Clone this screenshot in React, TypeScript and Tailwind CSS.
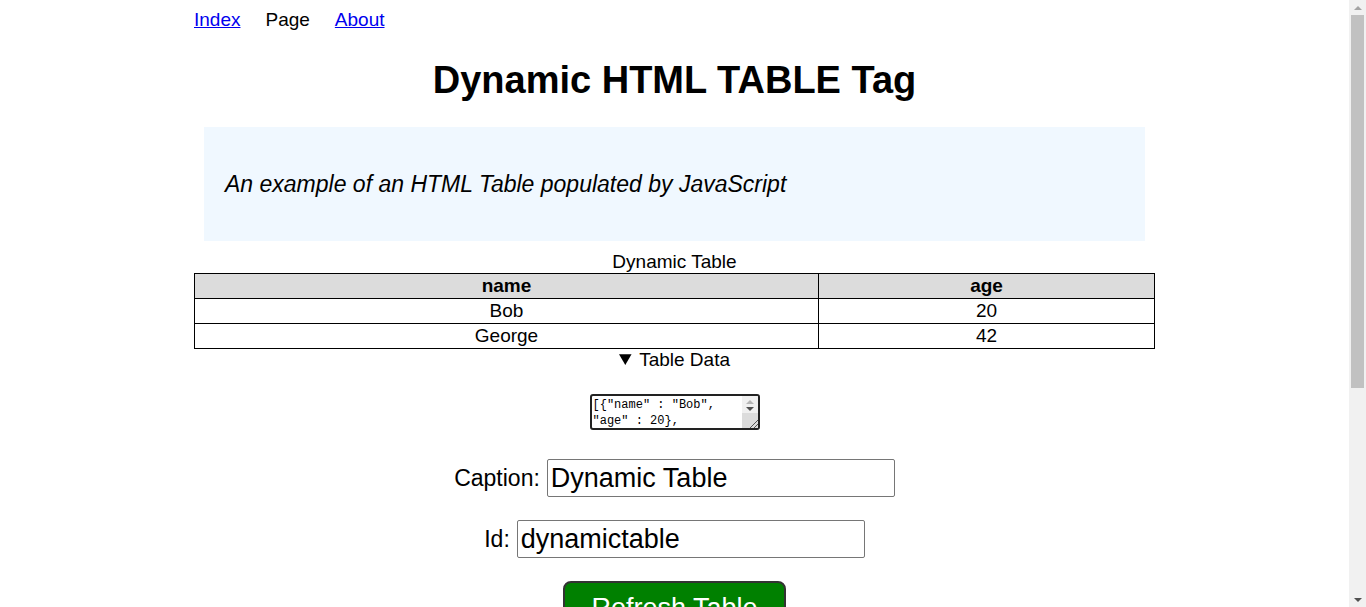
import { useState } from 'react';

type Row = { name: string; age: number };

const initialData: Row[] = [
  { name: 'Bob', age: 20 },
  { name: 'George', age: 42 },
];

// window scrollbar, drawn since the page is longer than the view
function PageScrollbar() {
  return (
    <div className="w-[17px] shrink-0 bg-[#f1f1f1] flex flex-col items-center">
      <div className="h-[15px] flex items-center justify-center">
        <div className="w-0 h-0 border-l-[4px] border-r-[4px] border-b-[4px] border-l-transparent border-r-transparent border-b-[#a3a3a3]" />
      </div>
      <div className="w-[13px] h-[373px] bg-[#c1c1c1]" />
      <div className="flex-1" />
      <div className="h-[15px] flex items-center justify-center">
        <div className="w-0 h-0 border-l-[4px] border-r-[4px] border-t-[4px] border-l-transparent border-r-transparent border-t-[#505050]" />
      </div>
    </div>
  );
}

export default function App() {
  const [caption, setCaption] = useState('Dynamic Table');
  const [tableId, setTableId] = useState('dynamictable');
  const [json, setJson] = useState(
    '[{"name" : "Bob", "age" : 20},\n{"name" : "George", "age" : 42}]'
  );
  const [rows, setRows] = useState<Row[]>(initialData);

  const refresh = () => {
    try {
      setRows(JSON.parse(json));
    } catch (e) {
      console.log('bad json', e);
    }
  };

  return (
    <div className="h-screen flex overflow-hidden bg-white text-black font-['Liberation_Sans',Arial,sans-serif] text-[19px]">
      <div className="flex-1 min-w-0">
        <div className="max-w-[961px] mx-auto pb-[310px]">
          {/* Nav */}
          <nav className="flex gap-[25px] pt-[9px] leading-[22px]">
            <a href="#" className="text-[#0000ee] underline">Index</a>
            <span>Page</span>
            <a href="#" className="text-[#0000ee] underline">About</a>
          </nav>

          <h1 className="mt-[27px] text-center text-[38px] leading-[44px] font-bold">
            Dynamic HTML TABLE Tag
          </h1>

          {/* Intro */}
          <div className="mt-[25px] mx-[10px] h-[114px] bg-[#f0f8ff] flex items-center px-[21px]">
            <p className="italic text-[23px] leading-[26px]">
              An example of an HTML Table populated by JavaScript
            </p>
          </div>

          {/* Table */}
          <table id={tableId} className="mt-[9px] w-full border-collapse">
            <caption className="leading-[22px] pt-px">{caption}</caption>
            <thead>
              <tr className="bg-[#dcdcdc]">
                <th className="w-[624px] border border-black font-bold leading-[22px] py-px">name</th>
                <th className="border border-black font-bold leading-[22px] py-px">age</th>
              </tr>
            </thead>
            <tbody>
              {rows.map((r) => (
                <tr key={r.name}>
                  <td className="border border-black text-center leading-[22px] py-px">{r.name}</td>
                  <td className="border border-black text-center leading-[22px] py-px">{r.age}</td>
                </tr>
              ))}
            </tbody>
          </table>

          {/* Table data editor */}
          <details open className="text-center">
            <summary className="leading-[22px] cursor-pointer">Table Data</summary>
            <div className="mt-[23px] inline-flex w-[170px] h-[36px] border-2 border-[#222] rounded-[3px] overflow-hidden align-top">
              <textarea
                value={json}
                onChange={(e) => setJson(e.target.value)}
                className="flex-1 min-w-0 resize-none overflow-hidden outline-none pl-px pt-px font-['Liberation_Mono',monospace] text-[12px] leading-[16px]"
              />
              <div className="w-[16px] shrink-0 bg-[#f0f0f0] flex flex-col items-center">
                <div className="pt-[4px] flex flex-col items-center gap-[3px]">
                  <div className="w-0 h-0 border-l-[4px] border-r-[4px] border-b-[4px] border-l-transparent border-r-transparent border-b-[#b5b5b5]" />
                  <div className="w-0 h-0 border-l-[4px] border-r-[4px] border-t-[4px] border-l-transparent border-r-transparent border-t-[#505050]" />
                </div>
                <div className="mt-auto w-full h-[15px] bg-[#dcdcdc] flex items-end justify-end">
                  <svg width="9" height="9" viewBox="0 0 9 9">
                    <path d="M9 1 L1 9 M9 5 L5 9" stroke="#555" strokeWidth="1" />
                  </svg>
                </div>
              </div>
            </div>
          </details>

          {/* Inputs */}
          <div className="mt-[29px] flex justify-center items-center gap-[7px]">
            <label htmlFor="caption" className="text-[23px]">Caption:</label>
            <input
              id="caption"
              value={caption}
              onChange={(e) => setCaption(e.target.value)}
              className="w-[348px] h-[38px] border border-[#767676] rounded-[2px] px-[3px] text-[27px]"
            />
          </div>
          <div className="mt-[23px] flex justify-center items-center gap-[7px]">
            <label htmlFor="tid" className="text-[23px]">Id:</label>
            <input
              id="tid"
              value={tableId}
              onChange={(e) => setTableId(e.target.value)}
              className="w-[348px] h-[38px] border border-[#767676] rounded-[2px] px-[3px] text-[27px]"
            />
          </div>

          <div className="mt-[23px] flex justify-center">
            <button
              onClick={refresh}
              className="w-[223px] bg-[#008000] text-white text-[27px] leading-[31px] py-[10px] border-2 border-[#333] rounded-[8px]"
            >
              Refresh Table
            </button>
          </div>
        </div>
      </div>
      <PageScrollbar />
    </div>
  );
}
